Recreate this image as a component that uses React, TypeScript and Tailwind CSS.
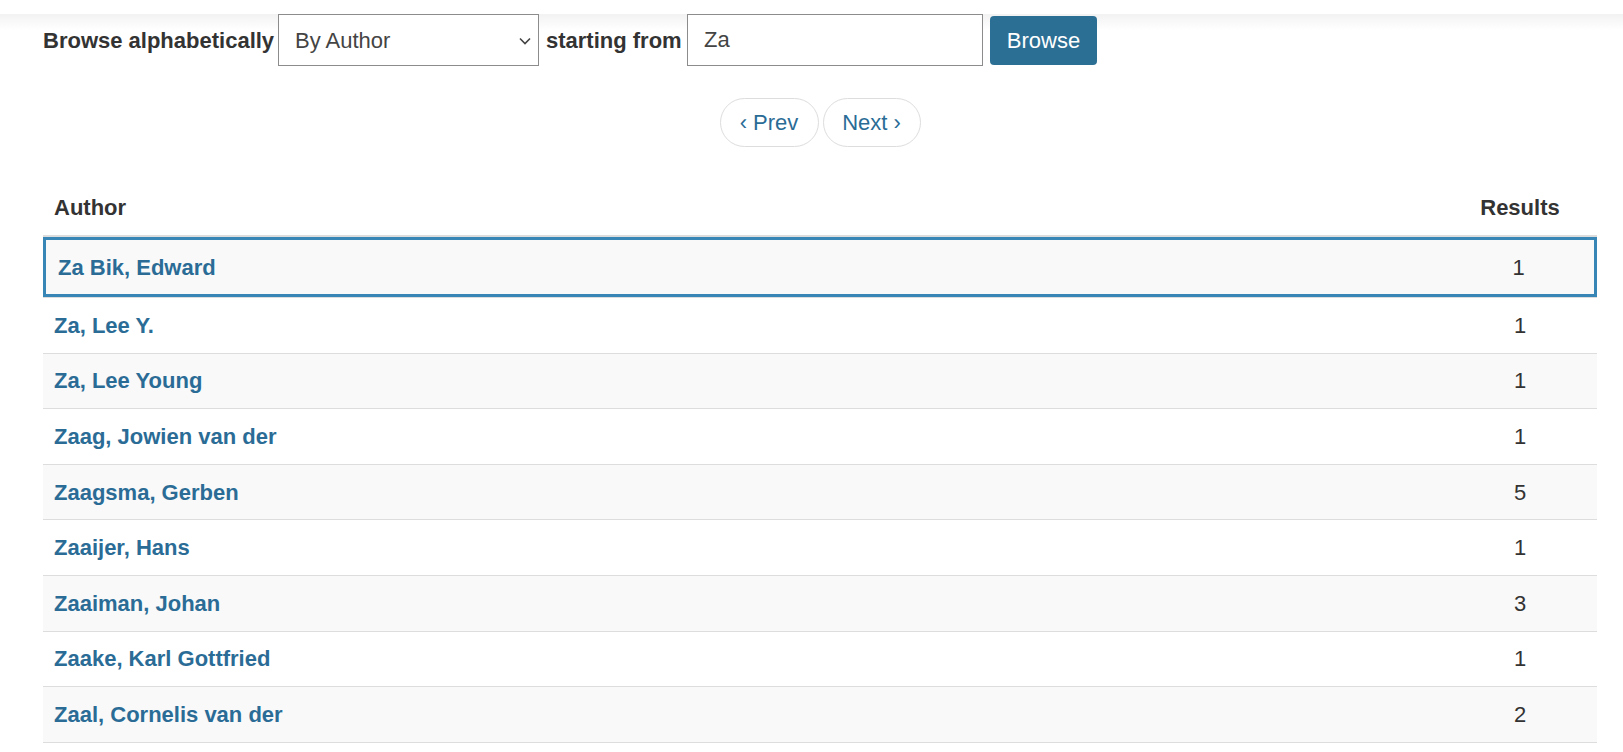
import { useState } from "react";

const authors = [
  { name: "Za Bik, Edward", count: 1 },
  { name: "Za, Lee Y.", count: 1 },
  { name: "Za, Lee Young", count: 1 },
  { name: "Zaag, Jowien van der", count: 1 },
  { name: "Zaagsma, Gerben", count: 5 },
  { name: "Zaaijer, Hans", count: 1 },
  { name: "Zaaiman, Johan", count: 3 },
  { name: "Zaake, Karl Gottfried", count: 1 },
  { name: "Zaal, Cornelis van der", count: 2 },
];

function BrowseForm() {
  const [by, setBy] = useState("author");
  const [start, setStart] = useState("Za");

  return (
    <form
      className="mt-[14px] flex h-[52px] items-center gap-[7px]"
      onSubmit={(e) => e.preventDefault()}
    >
      <label className="w-[228px] whitespace-nowrap text-[22px] font-bold text-[#333]">
        Browse alphabetically
      </label>
      <div className="relative h-[52px] w-[261px]">
        <select
          value={by}
          onChange={(e) => setBy(e.target.value)}
          className="h-full w-full appearance-none border border-[#8c8c8c] bg-white pl-[16px] text-[22px] text-[#444] outline-none"
        >
          <option value="author">By Author</option>
          <option value="title">By Title</option>
          <option value="subject">By Subject</option>
        </select>
        <svg
          className="pointer-events-none absolute right-[8px] top-[23px]"
          width="12"
          height="8"
          viewBox="0 0 12 8"
          fill="none"
        >
          <polyline points="1,1.5 6,6.5 11,1.5" stroke="#444" strokeWidth="1.6" />
        </svg>
      </div>
      <label className="w-[134px] whitespace-nowrap text-[22px] font-bold text-[#333]">
        starting from
      </label>
      <input
        value={start}
        onChange={(e) => setStart(e.target.value)}
        className="h-[52px] w-[296px] border border-[#8c8c8c] bg-white pl-[16px] text-[22px] text-[#444] outline-none"
      />
      <button
        type="submit"
        className="h-[49px] w-[107px] rounded-[4px] bg-[#2c6f94] text-[22px] text-white"
      >
        Browse
      </button>
    </form>
  );
}

export default function App() {
  return (
    <div className="min-h-screen w-full bg-[linear-gradient(to_bottom,#f2f2f2,#ffffff_16px)] font-['Liberation_Sans',Arial,sans-serif]">
      <div className="ml-[43px] w-[1554px]">
        <BrowseForm />

        {/* Pager */}
        <div className="mt-[32px] flex justify-center gap-[4px]">
          <button className="h-[49px] w-[99px] rounded-full border border-[#dddddd] bg-white text-[22px] text-[#2a6c96]">
            ‹ Prev
          </button>
          <button className="h-[49px] w-[98px] rounded-full border border-[#dddddd] bg-white text-[22px] text-[#2a6c96]">
            Next ›
          </button>
        </div>

        {/* Results table */}
        <div className="mt-[34px]">
          <div className="flex h-[56px] items-center border-b-2 border-[#dddddd] pb-[2px] text-[22px] font-bold text-[#333]">
            <div className="flex-1 pl-[11px]">Author</div>
            <div className="w-[154px] text-center">Results</div>
          </div>
          {authors.map((a, i) => {
            const striped = i % 2 === 0;
            const focused = i === 0;
            return (
              <div
                key={a.name}
                className={
                  focused
                    ? "flex h-[60px] items-center border-[3px] border-[#3786b5] bg-[#f9f9f9] text-[22px]"
                    : i === authors.length - 1
                      ? "flex h-[56.6px] items-center border-y border-[#dddddd] text-[22px] " +
                        (striped ? "bg-[#f9f9f9]" : "bg-white")
                      : "flex h-[55.6px] items-center border-t border-[#dddddd] text-[22px] " +
                        (striped ? "bg-[#f9f9f9]" : "bg-white")
                }
              >
                <a
                  href="#"
                  className={
                    "flex-1 font-bold text-[#2a6c96] " + (focused ? "pl-[12px]" : "pl-[11px]")
                  }
                >
                  {a.name}
                </a>
                <div className={"text-center text-[#333] " + (focused ? "w-[151px]" : "w-[154px]")}>
                  {a.count}
                </div>
              </div>
            );
          })}
        </div>
      </div>
    </div>
  );
}
